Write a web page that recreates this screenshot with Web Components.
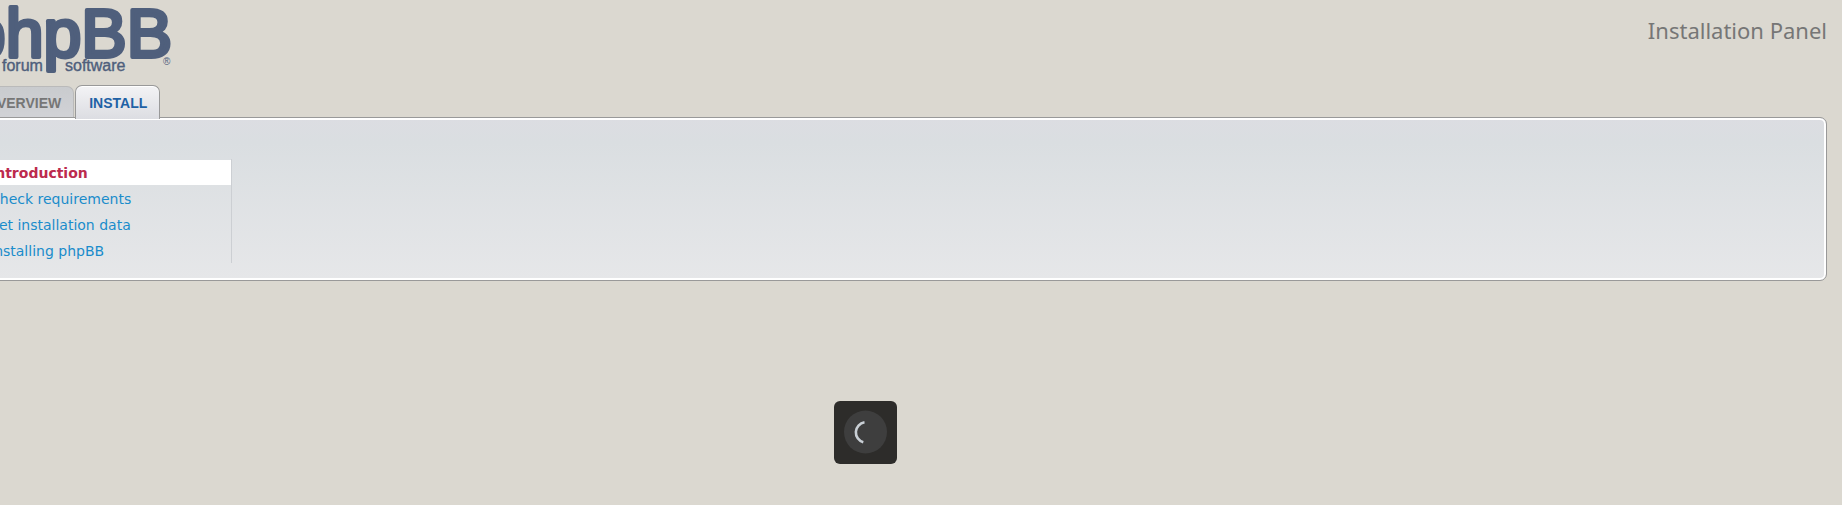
<!DOCTYPE html>
<html lang="en">
<head>
<meta charset="utf-8">
<title>Installation Panel</title>
<style>
    body {
        margin: 0;
        min-height: 100vh;
        background: #dbd8d0;
        font-family: "DejaVu Sans", Verdana, sans-serif;
        overflow: hidden;
    }
</style>
</head>
<body>
<install-page>
    <install-header slot="header" heading="Installation Panel"></install-header>
    <install-tabs slot="tabs">
        <install-tab>Overview</install-tab>
        <install-tab active>Install</install-tab>
    </install-tabs>
    <install-panel slot="panel">
        <install-menu>
            <install-step active>Introduction</install-step>
            <install-step>Check requirements</install-step>
            <install-step>Set installation data</install-step>
            <install-step>Installing phpBB</install-step>
        </install-menu>
    </install-panel>
</install-page>
<loading-indicator></loading-indicator>

<script>
class BaseElement extends HTMLElement {
    connectedCallback() {
        if (this.shadowRoot) return;
        this.attachShadow({ mode: 'open' });
        this.shadowRoot.innerHTML = this.render();
    }
}

class InstallPage extends BaseElement {
    render() {
        return `
            <style>
                :host {
                    display: block;
                    /* the page is scrolled a little to the right */
                    margin-left: -45px;
                    padding-right: 15px;
                }
            </style>
            <slot name="header"></slot>
            <slot name="tabs"></slot>
            <main><slot name="panel"></slot></main>
        `;
    }
}
customElements.define('install-page', InstallPage);

class InstallHeader extends BaseElement {
    render() {
        return `
            <style>
                :host { display: block; }
                header {
                    display: flex;
                    justify-content: space-between;
                    align-items: flex-start;
                    height: 85px;
                }
                svg { display: block; fill: #4f5f7c; stroke: #4f5f7c; stroke-linejoin: round; }
                text { font-family: "Liberation Sans", Arial, sans-serif; }
                .name { font-size: 68px; stroke-width: 4; }
                .sub { font-size: 16px; stroke-width: 0.4; }
                .mark { font-size: 10px; stroke: none; }
                h1 {
                    margin: 0;
                    padding-top: 15px;
                    font: 22px/30px "Noto Sans", "Trebuchet MS", sans-serif;
                    color: #767676;
                }
            </style>
            <header>
                <a href="#" aria-label="phpBB forum software">
                    <svg width="220" height="76" viewBox="0 0 220 76">
                        <text class="name" x="217" y="57" text-anchor="end">phpBB</text>
                        <text class="sub" x="47" y="71">forum</text>
                        <text class="sub" x="110" y="71">software</text>
                        <text class="mark" x="208" y="65">®</text>
                    </svg>
                </a>
                <h1>${this.getAttribute('heading')}</h1>
            </header>
        `;
    }
}
customElements.define('install-header', InstallHeader);

class InstallTabs extends BaseElement {
    render() {
        return `
            <style>
                :host { display: block; }
                nav {
                    display: flex;
                    align-items: flex-end;
                    gap: 1px;
                    padding-left: 18px;
                }
            </style>
            <nav aria-label="Sections"><slot></slot></nav>
        `;
    }
}
customElements.define('install-tabs', InstallTabs);

class InstallTab extends BaseElement {
    render() {
        return `
            <style>
                :host { display: block; }
                a {
                    display: block;
                    box-sizing: border-box;
                    height: 31px;
                    padding: 0 12px;
                    border: 1px solid #bababa;
                    border-bottom: 0;
                    border-radius: 7px 7px 0 0;
                    background: linear-gradient(#c9cbce, #d1d2d6);
                    color: #767676;
                    font: bold 14px/33px "Liberation Sans", Arial, sans-serif;
                    text-decoration: none;
                    text-transform: uppercase;
                }
                :host([active]) { margin-bottom: -2px; z-index: 1; }
                :host([active]) a {
                    height: 34px;
                    padding: 0 12px 0 13px;
                    border-color: #999;
                    background: linear-gradient(#f3f3f5, #dcdde2);
                    box-shadow: inset 0 1px #fff;
                    color: #1f61a5;
                    line-height: 34px;
                }
            </style>
            <a href="#"><slot></slot></a>
        `;
    }
}
customElements.define('install-tab', InstallTab);

class InstallPanel extends BaseElement {
    render() {
        return `
            <style>
                :host { display: block; }
                section {
                    border: 1px solid #999;
                    border-radius: 7px;
                    padding: 41px 17px 17px;
                    background: linear-gradient(#dcdde2, #dadee1 15%, #e6e7e9);
                    box-shadow: inset 0 0 0 2px #fff;
                }
            </style>
            <section><slot></slot></section>
        `;
    }
}
customElements.define('install-panel', InstallPanel);

class InstallMenu extends BaseElement {
    render() {
        return `
            <style>
                :host { display: block; }
                nav {
                    display: flex;
                    flex-direction: column;
                    gap: 1px;
                    box-sizing: border-box;
                    width: 259px;
                    padding-top: 1px;
                    border-right: 1px solid #cccfd3;
                }
            </style>
            <nav aria-label="Installation steps"><slot></slot></nav>
        `;
    }
}
customElements.define('install-menu', InstallMenu);

class InstallStep extends BaseElement {
    render() {
        return `
            <style>
                :host { display: block; }
                a {
                    display: block;
                    padding: 1px 0 0 17px;
                    color: #1a8ccb;
                    font-size: 14px;
                    line-height: 24px;
                    text-decoration: none;
                }
                :host([active]) a {
                    background: #fff;
                    color: #bc2a4d;
                    font-weight: bold;
                }
            </style>
            <a href="#"><slot></slot></a>
        `;
    }
}
customElements.define('install-step', InstallStep);

class LoadingIndicator extends BaseElement {
    render() {
        return `
            <style>
                :host {
                    position: fixed;
                    left: calc(50% - 87px);
                    bottom: 41px;
                    width: 63px;
                    height: 63px;
                    border-radius: 6px;
                    background: #2d2c2a;
                }
                svg { display: block; }
            </style>
            <svg width="63" height="63" viewBox="0 0 63 63" role="img" aria-label="Loading">
                <circle cx="31.5" cy="31" r="21.5" fill="#3e3e3e"/>
                <path d="M30.500 21.300A10.200 10.200 0 0 0 29.300 41.200" fill="none" stroke="#c9cfd5" stroke-width="2.600"/>
            </svg>
        `;
    }
}
customElements.define('loading-indicator', LoadingIndicator);
</script>
</body>
</html>
